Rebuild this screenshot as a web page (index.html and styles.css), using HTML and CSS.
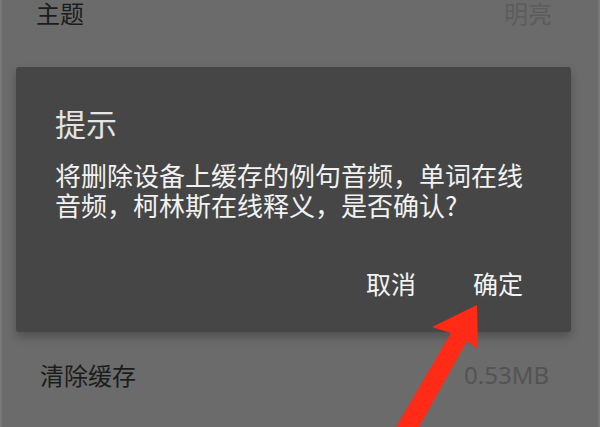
FILE: index.html
```html
<!DOCTYPE html>
<html lang="zh-CN">
  <head>
    <meta charset="UTF-8" />
    <meta name="viewport" content="width=device-width, initial-scale=1.0" />
    <title>设置</title>
    <link rel="stylesheet" href="styles.css">
  </head>
  <body>
    <main class="screen">
      <div class="setting-row top-row">
        <span class="setting-name">主题</span>
        <span class="setting-value">明亮</span>
      </div>

      <section class="dialog">
        <h2 class="dialog-title">提示</h2>
        <p class="dialog-text">将删除设备上缓存的例句音频，单词在线音频，柯林斯在线释义，是否确认?</p>
        <div class="dialog-actions">
          <button class="dialog-button" type="button">取消</button>
          <button class="dialog-button" type="button">确定</button>
        </div>
      </section>

      <div class="setting-row cache-row">
        <span class="setting-name">清除缓存</span>
        <span class="setting-value size">0.53MB</span>
      </div>

      <svg class="arrow" width="600" height="427" viewBox="0 0 600 427">
        <polygon points="477,305 432,327 451,333 396,427 419,427 467,341 478,349" fill="#ff2b16" />
      </svg>
    </main>
  </body>
</html>
```

FILE: styles.css
```css
* {
  box-sizing: border-box;
}
body {
  margin: 0;
  background-color: #6b6b6b;
  font-family: "Noto Sans CJK SC", "Noto Sans", sans-serif;
}
.screen {
  position: relative;
  height: 427px;
  overflow: hidden;
  display: flex;
  flex-direction: column;
  border-left: 2px solid #787878;
  border-right: 2px solid #787878;
}

.setting-row {
  display: flex;
  justify-content: space-between;
  align-items: center;
  font-size: 24px;
  line-height: 28px;
}

.top-row {
  line-height: 26px;
  padding: 0 46px 0 34px;
}

.cache-row {
  margin-top: 29px;
  padding: 0 49px 0 38px;
}

.setting-name {
  color: #1c1c1c;
}

.setting-value {
  color: #5c5c5c;
}

.size {
  font-family: "Noto Sans", sans-serif;
  font-size: 24px;
  color: #535353;
}

.dialog {
  margin: 41px 27px 0 14px;
  padding: 36px 48px 34px 39px;
  background-color: #464646;
  border-radius: 3px;
  box-shadow: 0 5px 10px rgba(0, 0, 0, 0.25);
}

.dialog-title {
  margin: 0;
  font-size: 31px;
  line-height: 40px;
  font-weight: normal;
  color: #e4e4e4;
}

.dialog-text {
  margin: 17px 0 0;
  font-size: 26px;
  line-height: 30px;
  color: #f2f2f2;
}

.dialog-actions {
  margin-top: 48px;
  display: flex;
  justify-content: flex-end;
  gap: 57px;
}

.dialog-button {
  all: unset;
  font-size: 25px;
  line-height: 30px;
  color: #f4f4f4;
}

.arrow {
  position: absolute;
  left: -2px;
  top: 0;
}
```
